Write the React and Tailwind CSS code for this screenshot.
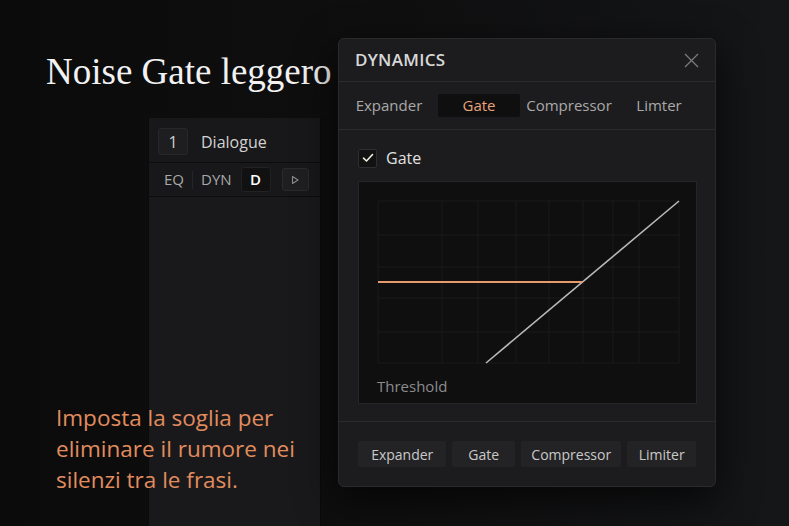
import React from 'react'

const tabs = ['Expander', 'Gate', 'Compressor', 'Limter']
const footerButtons = [
    { label: 'Expander', w: 'w-[89px]' },
    { label: 'Gate', w: 'w-[63px]' },
    { label: 'Compressor', w: 'w-[101px]' },
    { label: 'Limiter', w: 'w-[69px]' },
]

const vLines = [19, 83, 119, 157, 190, 224, 254, 280, 320]
const hLines = [19, 53, 85, 116, 150, 181]

const GateGraph = () => (
    <svg width="337" height="221" className="block">
        {vLines.map((x) => (
            <line key={'v' + x} x1={x} y1={19} x2={x} y2={181} stroke="#1b1b1d" strokeWidth="1" />
        ))}
        {hLines.map((y) => (
            <line key={'h' + y} x1={19} y1={y} x2={320} y2={y} stroke="#1b1b1d" strokeWidth="1" />
        ))}
        <line x1={127} y1={181} x2={320} y2={19} stroke="#b9b9b9" strokeWidth="1.6" />
        <line x1={19} y1={100} x2={224} y2={100} stroke="#e79a6c" strokeWidth="2.2" />
    </svg>
)

const ChannelStrip = () => (
    <div className="w-[172px] h-full flex flex-col bg-[#18181a] border-l border-[#0a0a0b]">
        <div className="h-[45px] flex items-center gap-[13px] pl-[9px] pt-[3px] border-b border-[#0c0c0d]">
            <div className="w-[30px] h-[27px] flex items-center justify-center rounded-[3px] bg-[#1e1e20] border border-[#28282a] text-[16px] text-[#cfcfcf]">1</div>
            <span className="text-[16px] text-[#d2d2d2]">Dialogue</span>
        </div>
        <div className="h-[34px] flex items-center pl-[15px] border-b border-[#0c0c0d] text-[15px] text-[#a8a8a8]">
            <span>EQ</span>
            <span className="w-px h-[18px] bg-[#262628] mx-[8px]"></span>
            <span>DYN</span>
            <span className="ml-[9px] w-[30px] h-[25px] flex items-center justify-center rounded-[3px] bg-[#111112] border border-[#222224] text-white font-semibold">D</span>
            <span className="ml-[11px] w-[27px] h-[23px] flex items-center justify-center rounded-[3px] bg-[#1f1f21] border border-[#2a2a2c]">
                <svg width="10" height="10" viewBox="0 0 10 10">
                    <path d="M2.5 1.5 L8 5 L2.5 8.5 Z" fill="none" stroke="#8a8a8a" strokeWidth="1.1" strokeLinejoin="round" />
                </svg>
            </span>
        </div>
        <div className="flex-1 bg-[#19191b]"></div>
    </div>
)

export default function App() {
    return (
        <div className="relative w-[789px] h-[526px] overflow-hidden bg-gradient-to-r from-[#0b0b0c] via-[#0f0f10] to-[#151618] font-['Open_Sans',sans-serif]">
            <div className="flex h-full pt-[118px]">
                <div className="w-[148px]"></div>
                <ChannelStrip />
                <div className="w-[18px] h-full bg-[#0e0e0f] border-l border-[#0a0a0b]"></div>
            </div>

            <h1 className="absolute left-[46px] top-[53px] text-[37px] leading-none text-[#f2f2f2] font-['Liberation_Serif',serif]">Noise Gate leggero</h1>

            <p className="absolute left-[56px] top-[402px] text-[22.5px] leading-[31px] text-[#e28c5e]">
                Imposta la soglia per<br />eliminare il rumore nei<br />silenzi tra le frasi.
            </p>

            <div className="absolute left-[338px] top-[38px] w-[378px] h-[449px] flex flex-col rounded-[6px] bg-[#1c1c1e] border border-[#2a2a2c] shadow-[0_12px_40px_rgba(0,0,0,0.7)]">
                <div className="h-[43px] flex items-center justify-between pl-[16px] pr-[16px] border-b border-[#2b2b2d]">
                    <span className="text-[17px] font-semibold tracking-[0.3px] text-[#d8d8d8]">DYNAMICS</span>
                    <svg width="15" height="15" viewBox="0 0 15 15">
                        <path d="M1 1 L14 14 M14 1 L1 14" stroke="#7a7a7a" strokeWidth="1.3" />
                    </svg>
                </div>
                <div className="h-[48px] flex items-center gap-[8px] pl-[9px] border-b border-[#2b2b2d]">
                    {tabs.map((t) => (
                        <div
                            key={t}
                            className={
                                t === 'Gate'
                                    ? 'w-[82px] h-[23px] flex items-center justify-center rounded-[2px] bg-[#0f0f10] text-[15px] text-[#e9a378]'
                                    : 'w-[82px] h-[23px] flex items-center justify-center text-[15px] text-[#a9a9a9]'
                            }
                        >
                            {t}
                        </div>
                    ))}
                </div>
                <div className="flex-1 flex flex-col px-[19px] pt-[18px] border-b border-[#2b2b2d]">
                    <div className="flex items-center gap-[9px] h-[20px]">
                        <div className="w-[19px] h-[19px] flex items-center justify-center rounded-[2px] bg-[#121213] border border-[#2e2e30]">
                            <svg width="12" height="10" viewBox="0 0 12 10">
                                <path d="M1.5 5.2 L4.5 8 L10.5 1.5" fill="none" stroke="#f0eedc" strokeWidth="1.6" strokeLinecap="round" strokeLinejoin="round" />
                            </svg>
                        </div>
                        <span className="text-[16px] text-[#e0e0e0]">Gate</span>
                    </div>
                    <div className="mt-[13px] w-[339px] h-[223px] flex flex-col bg-[#0f0f10] border border-[#262628]">
                        <GateGraph />
                        <span className="-mt-[28px] pl-[18px] text-[15px] text-[#8c8c8c]">Threshold</span>
                    </div>
                </div>
                <div className="h-[64px] flex items-center gap-[6px] px-[19px]">
                    {footerButtons.map((b) => (
                        <div key={b.label} className={b.w + ' h-[26px] flex items-center justify-center rounded-[2px] bg-[#232325] text-[14px] text-[#c9c9c9]'}>
                            {b.label}
                        </div>
                    ))}
                </div>
            </div>
        </div>
    )
}
